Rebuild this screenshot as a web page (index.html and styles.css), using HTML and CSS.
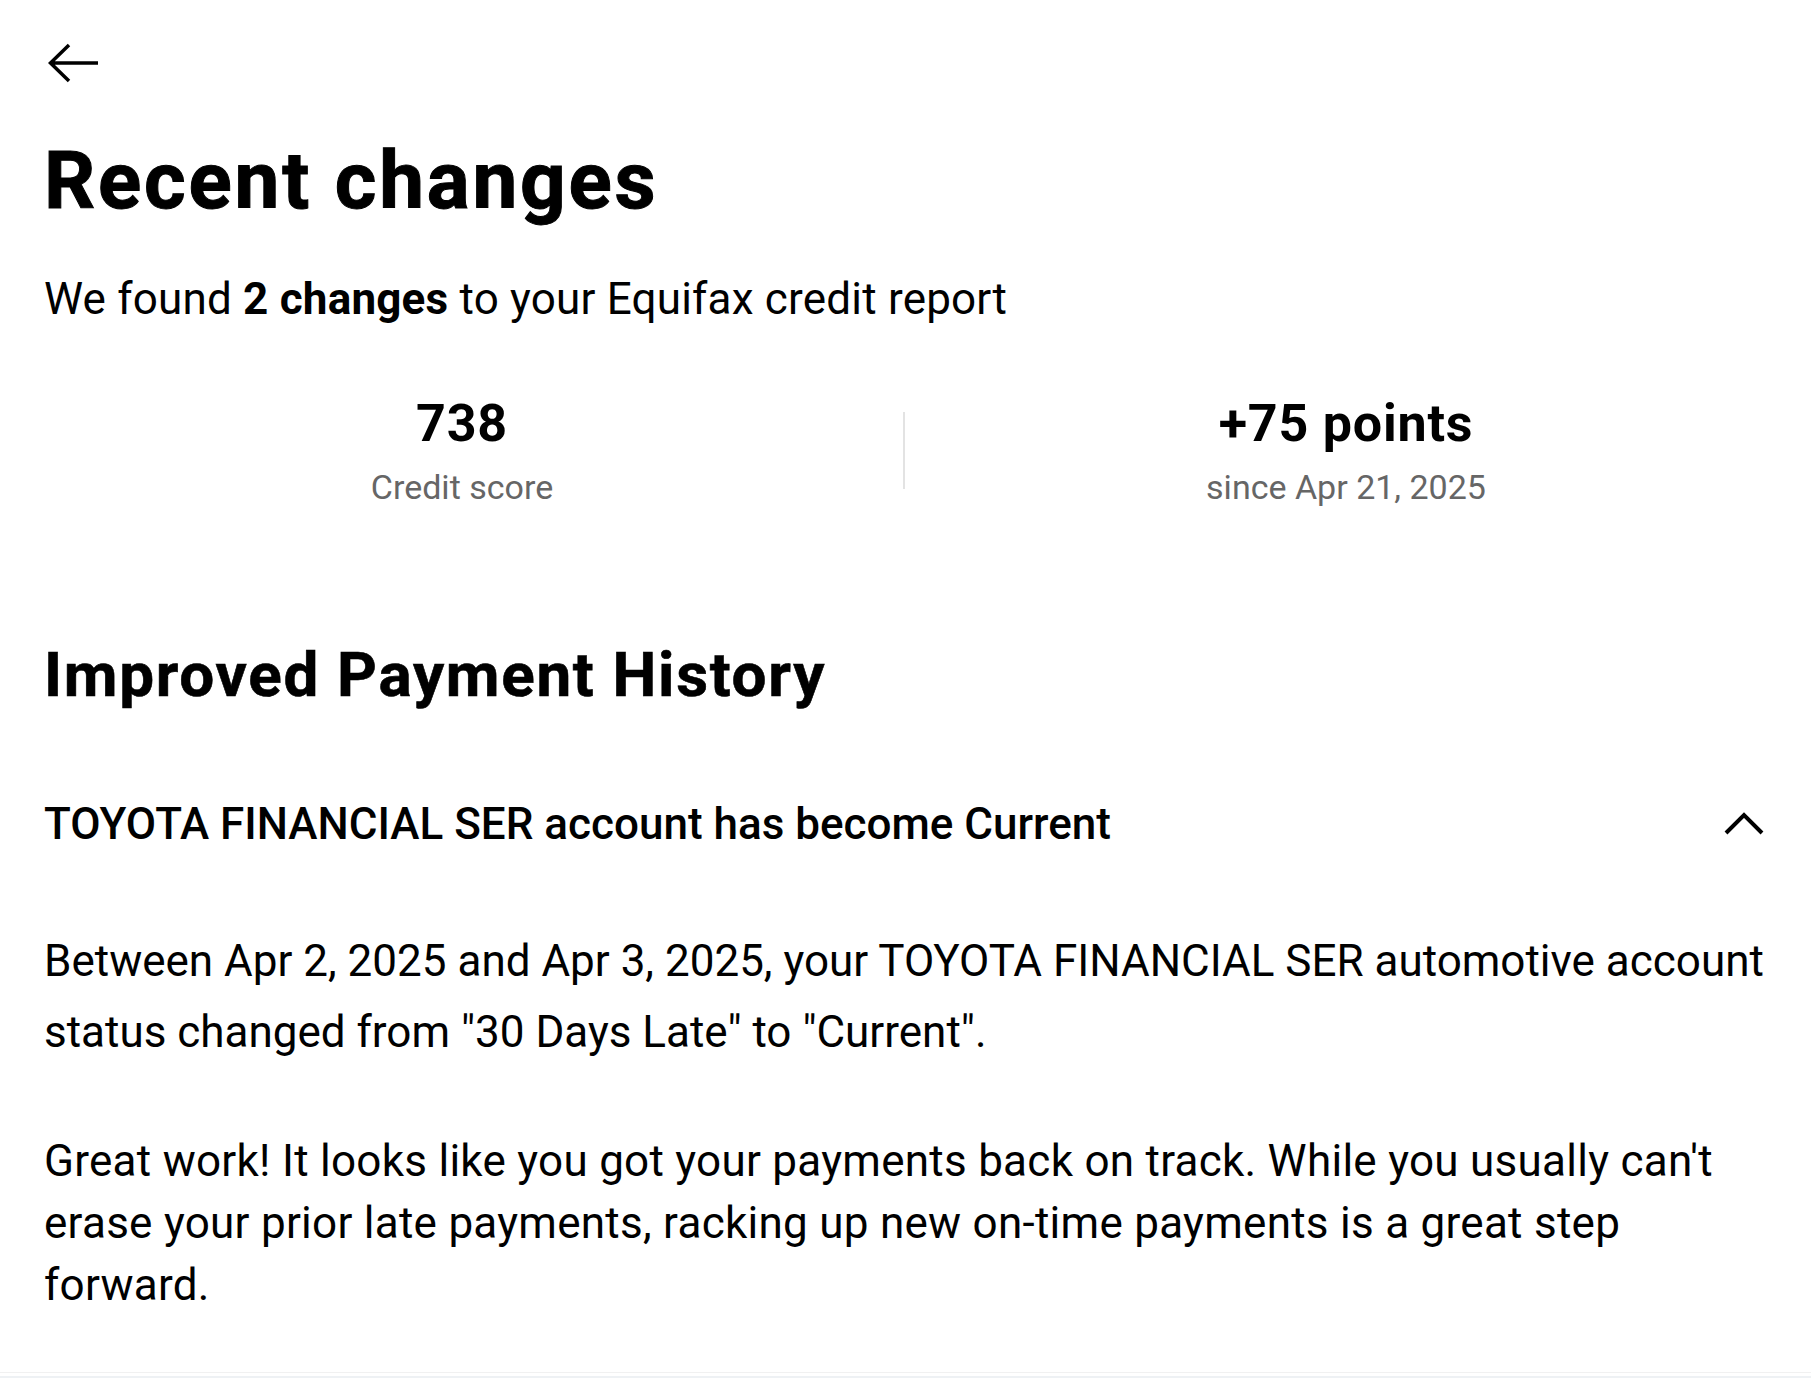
FILE: index.html
```html
<!DOCTYPE html>
<html lang="en">
<head>
<meta charset="utf-8">
<title>Recent changes</title>
<link rel="stylesheet" href="styles.css">
</head>
<body>
<main class="page">
  <header class="topbar">
    <button class="back" aria-label="Back">
      <svg width="50" height="40" viewBox="0 0 50 40" aria-hidden="true">
        <path d="M50 20 H2.5 M21 2 L2.5 20 L21 38" fill="none" stroke="#000" stroke-width="3.5"/>
      </svg>
    </button>
  </header>

  <h1 class="title">Recent changes</h1>
  <p class="subtitle">We found <strong>2 changes</strong> to your Equifax credit report</p>

  <section class="stats">
    <div class="stat">
      <div class="stat-value">738</div>
      <div class="stat-label">Credit score</div>
    </div>
    <div class="stat-divider"></div>
    <div class="stat">
      <div class="stat-value">+75 points</div>
      <div class="stat-label">since Apr 21, 2025</div>
    </div>
  </section>

  <section class="change-group">
    <h2 class="group-title">Improved Payment History</h2>
    <div class="change-head">
      <h3 class="change-title">TOYOTA FINANCIAL SER account has become Current</h3>
      <svg class="chevron" width="40" height="24" viewBox="0 0 40 24" aria-hidden="true">
        <path d="M2 21 L20 3 L38 21" fill="none" stroke="#000" stroke-width="4"/>
      </svg>
    </div>
    <p class="change-body">Between Apr 2, 2025 and Apr 3, 2025, your TOYOTA FINANCIAL SER automotive account status changed from "30 Days Late" to "Current".</p>
    <p class="change-note">Great work! It looks like you got your payments back on track. While you usually can't erase your prior late payments, racking up new on-time payments is a great step forward.</p>
  </section>
</main>
<div class="bottom-edge"></div>
</body>
</html>
```

FILE: styles.css
```css
html, body {
  margin: 0;
  padding: 0;
  background: #fff;
}

body {
  font-family: Roboto, "Liberation Sans", sans-serif;
  color: #000;
  overflow: hidden;
}

.page {
  padding: 0 47px 0 44px;
}

.topbar {
  padding-top: 43px;
  height: 40px;
}

.back {
  border: 0;
  background: none;
  padding: 0;
  margin: 0 0 0 4px;
  display: block;
  width: 50px;
  height: 40px;
  cursor: pointer;
}

.back svg {
  display: block;
}

.title {
  margin: 50px 0 0;
  font-size: 80px;
  line-height: 96px;
  font-weight: 700;
  letter-spacing: 2.8px;
  -webkit-text-stroke: 1px #000;
}

.subtitle {
  margin: 42px 0 0;
  font-size: 44px;
  line-height: 56px;
  font-weight: 400;
  letter-spacing: 0.2px;
}

.subtitle strong {
  font-weight: 700;
}

.stats {
  margin: 66px -23px 0;
  display: grid;
  grid-template-columns: 1fr auto 1fr;
  align-items: center;
}

.stat {
  text-align: center;
}

.stat-value {
  font-size: 52px;
  line-height: 62px;
  font-weight: 700;
  letter-spacing: 0.8px;
}

.stat-label {
  margin-top: 12px;
  font-size: 34px;
  line-height: 40px;
  color: #666;
}

.stat-divider {
  width: 2px;
  height: 77px;
  background: #e3e3e3;
}

.change-group {
  margin-top: 131px;
}

.group-title {
  margin: 0;
  font-size: 62px;
  line-height: 74px;
  font-weight: 700;
  letter-spacing: 1.7px;
  -webkit-text-stroke: 0.6px #000;
}

.change-head {
  margin-top: 84px;
  display: flex;
  align-items: center;
  justify-content: space-between;
}

.change-title {
  margin: 0;
  font-size: 44px;
  line-height: 56px;
  font-weight: 500;
}

.chevron {
  display: block;
  flex-shrink: 0;
}

.change-body {
  margin: 74px 0 0;
  font-size: 44px;
  line-height: 71px;
}

.change-note {
  margin: 62px 0 0;
  font-size: 44px;
  line-height: 62px;
  letter-spacing: 0.27px;
}

.bottom-edge {
  margin-top: 56px;
  border-top: 1px solid #f1f1f1;
  height: 10px;
  box-shadow: inset 0 3px 0 #fff, inset 0 10px 0 #eef1f4;
}
```
